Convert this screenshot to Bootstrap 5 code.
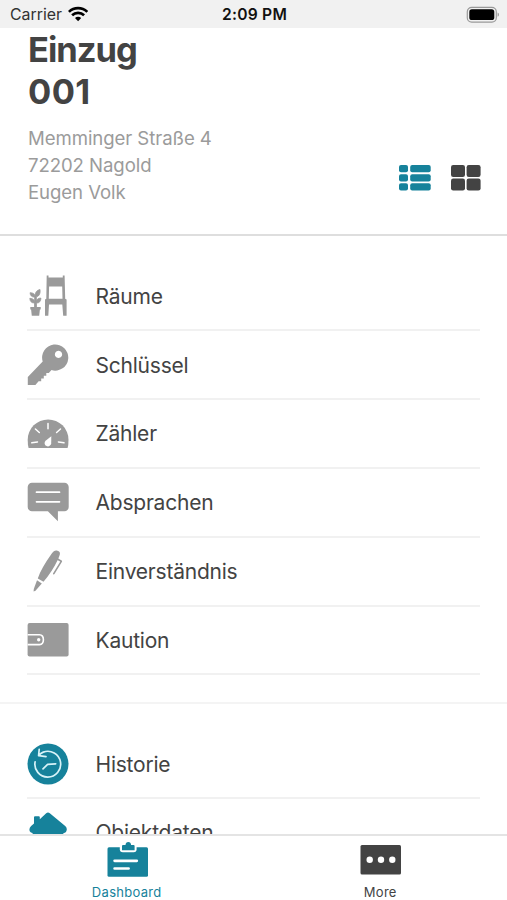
<!DOCTYPE html>
<html lang="de">
<head>
<meta charset="utf-8">
<meta name="viewport" content="width=device-width, initial-scale=1">
<title>Einzug 001</title>
<link href="https://cdn.jsdelivr.net/npm/bootstrap@5.3.0/dist/css/bootstrap.min.css" rel="stylesheet">
<style>
  :root { --teal: #16829b; --ink: #434343; --icon: #9a9a9a; }
  body { font-family: Inter, "Liberation Sans", sans-serif; color: var(--ink); letter-spacing: 0; }
  svg { display: block; flex: none; }
  .status-bar { height: 28px; background: #f1f1f1; color: #222; padding: 2px 8px 0 10px; font-size: 16px; }
  .status-side { flex: 1 1 0; }
  .status-side svg { margin-top: -2px; }
  .wifi { margin-left: 6px; }
  .carrier { font-size: 15.9px; color: #333; }
  .clock { font-size: 15.6px; font-weight: 600; color: #111; letter-spacing: .25px; }
  .page-head { height: 208px; border-bottom: 2px solid #dedede; padding: 0 26px 0 28px; }
  .title { font-size: 34.5px; line-height: 42px; font-weight: 700; letter-spacing: -1px; margin: 0; padding-top: 1px; }
  .title-number { letter-spacing: .4px; }
  .address { font-size: 18.6px; line-height: 27px; color: #9b9b9b; letter-spacing: -.08px; margin-top: 12px; }
  .views { gap: 20px; padding-bottom: 43px; }
  .entries { padding: 26.6px 27px 0 27px; }
  .entries + .entries { border-top: 2px solid #f4f4f4; }
  .entries-main { padding-bottom: 26.4px; }
  .entry { height: 68.8px; border-bottom: 2px solid #f1f1f1; gap: 26.5px; padding-top: 1px; font-size: 21px; letter-spacing: -.22px; }
  .entry svg { margin-top: -1px; }
  .tab-bar { height: 66px; border-top: 2px solid #e4e4e4; background: #fff; font-size: 13px; letter-spacing: .3px; }
  .tab-item { flex: 1 1 0; padding-top: 5px; }
  .tab-item svg { margin-bottom: 6px; }
  .teal { color: var(--teal); }
  .gray { color: var(--icon); }
</style>
<script src="https://cdn.jsdelivr.net/npm/bootstrap@5.3.0/dist/js/bootstrap.bundle.min.js"></script>
</head>
<body>
<div class="vh-100 d-flex flex-column overflow-hidden bg-white">
  <div class="status-bar d-flex align-items-center flex-shrink-0">
    <div class="status-side d-flex align-items-center">
      <span class="carrier">Carrier</span>
      <svg class="wifi" width="20" height="16" viewBox="68 6 20 16" fill="none" stroke="#000" stroke-width="2.7">
        <path d="M68.9 11.9a13.3 13.3 0 0 1 18.4 0M72.1 15.2a8.8 8.8 0 0 1 12 0"/>
        <path d="M78.1 21.2l-3.1-3.1a4.4 4.4 0 0 1 6.2 0z" fill="#000" stroke="none"/>
      </svg>
    </div>
    <span class="clock">2:09 PM</span>
    <div class="status-side d-flex justify-content-end">
      <svg width="33" height="17" viewBox="466 5 33 17">
        <rect x="467.3" y="6.300" width="29" height="14.800" rx="4.400" fill="none" stroke="#999" stroke-width="1.200"/>
        <rect x="469.3" y="8.300" width="25" height="10.800" rx="2.600" fill="#000"/>
        <path d="M497.6 11.600q1.400.6 1.400 2.100t-1.400 2.100z" fill="#999"/>
      </svg>
    </div>
  </div>

  <header class="page-head d-flex justify-content-between align-items-end flex-shrink-0">
    <div class="align-self-start">
      <h1 class="title">Einzug<br><span class="title-number">001</span></h1>
      <div class="address">Memminger Straße 4<br>72202 Nagold<br>Eugen Volk</div>
    </div>
    <div class="views d-flex">
      <svg width="32" height="26" viewBox="0 0 32 26" fill="#16829b">
        <rect y="0" width="9" height="7.200" rx="2"/><rect x="11.200" y="0" width="20.500" height="7.200" rx="2"/>
        <rect y="9.200" width="9" height="7.200" rx="2"/><rect x="11.200" y="9.200" width="20.500" height="7.200" rx="2"/>
        <rect y="18.300" width="9" height="7.200" rx="2"/><rect x="11.200" y="18.300" width="20.500" height="7.200" rx="2"/>
      </svg>
      <svg width="30" height="26" viewBox="0 0 30 26" fill="#434343">
        <rect y="0" width="14" height="12" rx="2.200"/><rect x="15.600" y="0" width="14" height="12" rx="2.200"/>
        <rect y="13.500" width="14" height="12" rx="2.200"/><rect x="15.600" y="13.500" width="14" height="12" rx="2.200"/>
      </svg>
    </div>
  </header>

  <main class="flex-grow-1 overflow-hidden">
    <section class="entries entries-main">
      <div class="entry d-flex align-items-center">
        <svg class="gray" width="42" height="42" viewBox="27 275.500 42 42" fill="currentColor">
          <path d="M46.700 276h1.800v2.100h14.300V276h1.800l.6 23.200 1.400.8V316.300h-3.400l-.9-11.300H49l-.7 11.300h-3.300V300l1.300-.8zM49.100 287l-.3 12.300h13.700L62.200 287z" fill-rule="evenodd"/>
          <path d="M30.300 307.600h10.400v2.400h-.8l-.7 6.300h-7.400l-.7-6.300h-.8z"/>
          <path d="M34.500 308v-4.500c-3.200 0-4.500-1.700-4.700-4.700 2.700.2 4.200 1.100 4.800 3.100v-4.200c-3-.1-4.500-1.900-4.500-4.500 2.700.1 4.200.9 4.900 2.900.3-3.500 1.900-5.400 5-6.100.6 4.200-.8 6.800-3.600 7.300v4c.8-1.800 2.200-2.700 4.500-2.700 0 3.200-1.500 4.900-4.400 5v4.400z" stroke="currentColor" stroke-width=".8"/>
        </svg>
        <span>Räume</span>
      </div>
      <div class="entry d-flex align-items-center">
        <svg class="gray" width="42" height="42" viewBox="27 344 42 42" fill="currentColor">
          <path d="M42.700 361.500a13.100 13.100 0 1 1 8.800 8.600l-2.700 2.900h-2.500v2.800h-2.500v2.700h-2.600v2.700h-2.600l-3.200 3.900h-7.600v-8.200zM58.500 350.800a3.600 3.600 0 1 0 .01 0z" fill-rule="evenodd"/>
        </svg>
        <span>Schlüssel</span>
      </div>
      <div class="entry d-flex align-items-center">
        <svg class="gray" width="42" height="42" viewBox="27 413 42 42">
          <path d="M28.600 448q-.9-2.500-.9-8.200a20.400 20.400 0 0 1 40.800 0q0 5.700-.9 8.200z" fill="currentColor"/>
          <path d="M48 423.500v5.300M35.400 429l3.900 3.500M60.500 429l-3.900 3.500M31.800 442.800l5.700-.9M64 442.800l-5.600-.9" stroke="#fff" stroke-width="1.500" stroke-linecap="round"/>
          <path d="M51.300 436.200l-.1 7a3.300 3.300 0 1 1-5.600-2.500z" fill="#fff"/>
        </svg>
        <span>Zähler</span>
      </div>
      <div class="entry d-flex align-items-center">
        <svg class="gray" width="42" height="42" viewBox="27 481.500 42 42">
          <path d="M32 483.300h32.400a4.300 4.300 0 0 1 4.300 4.300v19.800a4.300 4.300 0 0 1-4.300 4.300h-6.500v10.100l-10-10.100H32a4.300 4.300 0 0 1-4.300-4.300v-19.800a4.300 4.300 0 0 1 4.300-4.300z" fill="currentColor"/>
          <path d="M36.500 492.700h23M36.500 502.300h23" stroke="#fff" stroke-width="1.700" stroke-linecap="round"/>
        </svg>
        <span>Absprachen</span>
      </div>
      <div class="entry d-flex align-items-center">
        <svg class="gray" width="42" height="42" viewBox="27 550.500 42 42" fill="currentColor">
          <path d="M37.800 579q3-9.500 14.300-25.400c1-1.400 2.700-2.900 4.500-2.600q3.800.5 3.300 3.600c-.2 1.500-1.300 4-2.200 5.900q-5.500 11.500-14.200 21.800z"/>
          <path d="M37 580.800l4.800 3.100-6.300 7.300-1.900.8.200-2.500z"/>
          <path d="M57.800 559.800l3.500 2-7.500 12.400" fill="none" stroke="currentColor" stroke-width="1.600" stroke-linejoin="round" stroke-linecap="round"/>
        </svg>
        <span>Einverständnis</span>
      </div>
      <div class="entry d-flex align-items-center">
        <svg class="gray" width="42" height="42" viewBox="27 619.500 42 42">
          <rect x="27.600" y="623.500" width="41" height="33.500" rx="2" fill="currentColor"/>
          <path d="M27.600 635.300h11.900q3.900.3 3.900 4.900t-3.900 4.900H27.600" fill="none" stroke="#fff" stroke-width="1.600"/>
          <circle cx="38.700" cy="640.200" r="1.700" fill="#fff"/>
        </svg>
        <span>Kaution</span>
      </div>
    </section>

    <section class="entries">
      <div class="entry d-flex align-items-center">
        <svg class="teal" width="42" height="42" viewBox="27 743.500 42 42" fill="none">
          <circle cx="48" cy="764.500" r="20.500" fill="currentColor"/>
          <path d="M35.100 762.300a12.900 12.900 0 1 0 8.200-9.700q-2.700 1-4.600 3.500M39.200 749.800l-.6 6.300 7.400 1.100M43 769.300l4.600-4.400 8.100-.6" stroke="#d8f3f8" stroke-width="1.700" stroke-linecap="round" stroke-linejoin="round"/>
        </svg>
        <span>Historie</span>
      </div>
      <div class="entry d-flex align-items-center">
        <svg class="teal" width="42" height="42" viewBox="27 812.500 42 42" fill="currentColor">
          <path d="M46.200 813.700q1.800-1.500 3.600 0l15.400 12.800q2.600 2.500 1 5.400-.8 1.500-2.800 1.500v19H32.600v-19q-2-.1-2.700-1.500-1.400-2.900 1.200-5.400l2.900-2.500v-6.300q0-.9 1-.9h3.800q1 0 1 .9v2z"/>
        </svg>
        <span>Objektdaten</span>
      </div>
    </section>
  </main>

  <nav class="tab-bar d-flex flex-shrink-0">
    <div class="tab-item teal d-flex flex-column align-items-center">
      <svg width="42" height="36" viewBox="106 841 42 36">
        <rect x="107.500" y="847.300" width="40.500" height="29.400" rx="1.500" fill="currentColor"/>
        <path d="M119.800 846v3.200q0 3 3 3h10.800q3 0 3-3V846z" fill="#fff"/>
        <path d="M122 850.300v-4.200q0-1 1-1h2.500q.2-3.100 2.800-3.100t2.800 3.100h2.500q1 0 1 1v4.200z" fill="currentColor"/>
        <path d="M114.600 860.800h22.200M114.600 868.500h14" stroke="#fff" stroke-width="2.700" stroke-linecap="round"/>
      </svg>
      <span>Dashboard</span>
    </div>
    <div class="tab-item d-flex flex-column align-items-center">
      <svg width="42" height="36" viewBox="359.500 841 42 36">
        <rect x="361" y="845" width="40.500" height="29.500" rx="1.500" fill="currentColor"/>
        <g fill="#fff"><circle cx="370.200" cy="859.800" r="3.200"/><circle cx="381.500" cy="859.800" r="3.200"/><circle cx="392.800" cy="859.800" r="3.200"/></g>
      </svg>
      <span>More</span>
    </div>
  </nav>
</div>
</body>
</html>
